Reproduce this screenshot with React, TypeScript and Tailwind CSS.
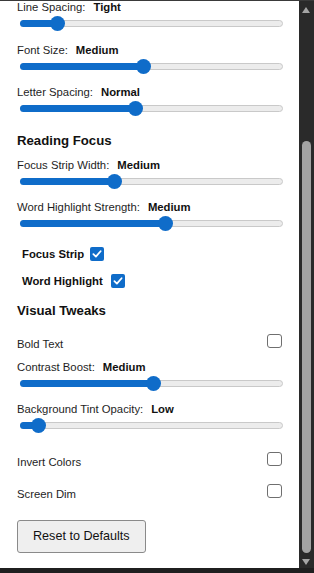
import React from 'react';

const FONT = '[font-family:"Liberation_Sans",Arial,sans-serif]';

type SliderProps = { label: string; value: string; pos: number };

// pos is 0-100, thumb travels inside the track
function SliderRow({ label, value, pos }: SliderProps) {
  const center = 7.5 + (pos / 100) * 248;
  return (
    <div>
      <div className="h-[12px] leading-[12px] text-[11.3px] text-[#1e1e1e] whitespace-nowrap">
        {label}
        <span className="ml-[8px] font-bold text-[#111]">{value}</span>
      </div>
      <div className="relative mt-[2px] ml-[3px] w-[263px] h-[16px] flex items-center">
        <div className="w-full h-[7px] rounded-full border border-[#c9c9c9] bg-[#ececec]" />
        <div
          className="absolute left-0 top-[4.5px] h-[7px] rounded-full bg-[#0f6cc9]"
          style={{ width: center }}
        />
        <div
          className="absolute top-[0.5px] w-[15px] h-[15px] rounded-full bg-[#0f6cc9]"
          style={{ left: center - 7.5 }}
        />
      </div>
    </div>
  );
}

function CheckBox({ checked }: { checked?: boolean }) {
  if (checked) {
    return (
      <span className="w-[14px] h-[14px] rounded-[2px] bg-[#0f6cc9] flex items-center justify-center shrink-0">
        <svg viewBox="0 0 14 14" className="w-[12px] h-[12px]">
          <path d="M2.8 7.2 L5.7 10 L11.2 3.8" fill="none" stroke="#fff" strokeWidth="2.1" strokeLinecap="round" strokeLinejoin="round" />
        </svg>
      </span>
    );
  }
  return <span className="w-[15px] h-[14px] rounded-[3px] border border-[#6f6f6f] bg-white shrink-0" />;
}

function ToggleRow({ label, className }: { label: string; className: string }) {
  return (
    <div className={`flex items-start justify-between w-[265px] ${className}`}>
      <span className="mt-[4px] h-[12px] leading-[12px] text-[11.3px] text-[#1e1e1e]">{label}</span>
      <CheckBox />
    </div>
  );
}

function Heading({ children, className }: { children: React.ReactNode; className: string }) {
  return (
    <div className={`h-[16px] leading-[16px] text-[13.2px] font-bold text-[#111] ${className}`}>{children}</div>
  );
}

function ScrollBar() {
  return (
    <div className="relative w-[15px] bg-[#2a2a2a] shrink-0">
      <div className="absolute left-[3px] top-[6px] w-0 h-0 border-l-[4.5px] border-r-[4.5px] border-b-[6px] border-l-transparent border-r-transparent border-b-[#a5a5a5]" />
      <div className="absolute left-[3px] top-[140px] w-[9px] h-[412px] rounded-full bg-[#a3a3a3]" />
      <div className="absolute left-[3px] top-[558px] w-0 h-0 border-l-[4.5px] border-r-[4.5px] border-t-[6px] border-l-transparent border-r-transparent border-t-[#a5a5a5]" />
    </div>
  );
}

export default function App() {
  return (
    <div className={`w-[314px] h-[573px] flex flex-col bg-[#1f1f1f] ${FONT}`}>
      <div className="h-px bg-[#3a3a3a]" />
      <div className="flex flex-1 min-h-0">
        <div className="w-[299px] bg-white pl-[17px] overflow-hidden">
          <SliderRow label="Line Spacing:" value="Tight" pos={12} />
          <div className="mt-[13px]">
            <SliderRow label="Font Size:" value="Medium" pos={46.6} />
          </div>
          <div className="mt-[12px]">
            <SliderRow label="Letter Spacing:" value="Normal" pos={43.7} />
          </div>

          <Heading className="mt-[17px]">Reading Focus</Heading>
          <div className="mt-[10px]">
            <SliderRow label="Focus Strip Width:" value="Medium" pos={34.9} />
          </div>
          <div className="mt-[12px]">
            <SliderRow label="Word Highlight Strength:" value="Medium" pos={55.8} />
          </div>

          <div className="mt-[15px] ml-[5px] flex items-center gap-[6px] h-[16px]">
            <span className="text-[11.3px] font-bold text-[#111]">Focus Strip</span>
            <CheckBox checked />
          </div>
          <div className="mt-[11px] ml-[5px] flex items-center gap-[8px] h-[16px]">
            <span className="text-[11.3px] font-bold text-[#111]">Word Highlight</span>
            <CheckBox checked />
          </div>

          <Heading className="mt-[14px]">Visual Tweaks</Heading>
          <ToggleRow label="Bold Text" className="mt-[15px]" />
          <div className="mt-[11px]">
            <SliderRow label="Contrast Boost:" value="Medium" pos={51} />
          </div>
          <div className="mt-[12px]">
            <SliderRow label="Background Tint Opacity:" value="Low" pos={4.6} />
          </div>
          <ToggleRow label="Invert Colors" className="mt-[19px]" />
          <ToggleRow label="Screen Dim" className="mt-[16px]" />

          <button className="mt-[20px] h-[33px] px-[15px] rounded-[3px] border border-[#8a8a8a] bg-[#efefef] text-[12.6px] text-[#111]">
            Reset to Defaults
          </button>
        </div>
        <ScrollBar />
      </div>
      <div className="h-[5px] bg-[#1f1f1f]" />
    </div>
  );
}
